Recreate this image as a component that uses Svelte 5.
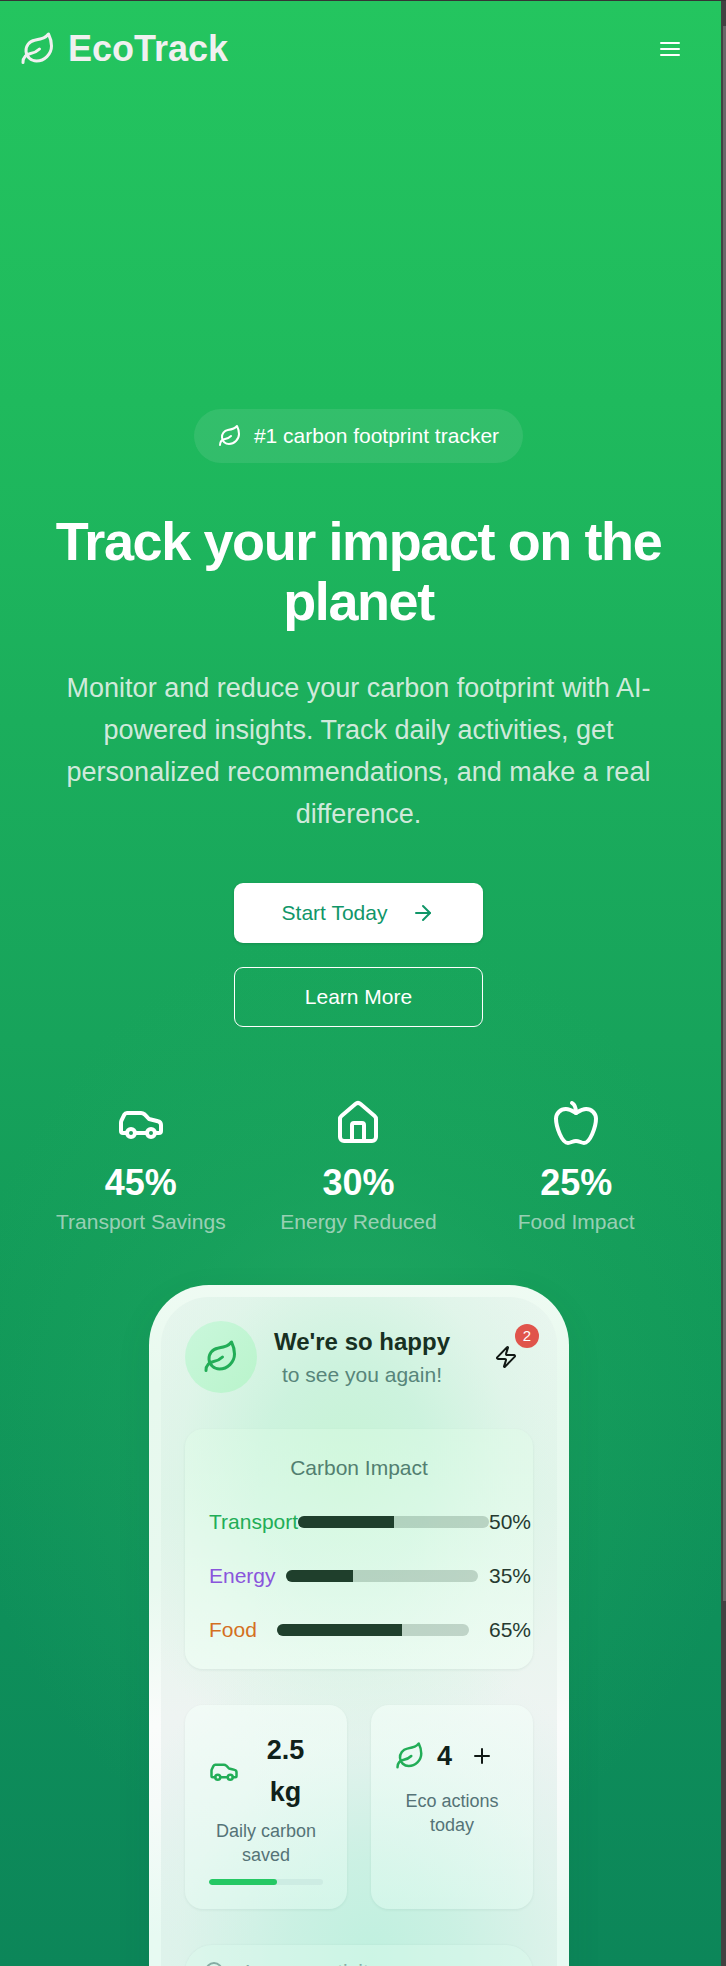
<script>
  const stats = [
    { icon: 'car', value: '45%', label: 'Transport Savings' },
    { icon: 'house', value: '30%', label: 'Energy Reduced' },
    { icon: 'apple', value: '25%', label: 'Food Impact' }
  ];
  const impact = [
    { label: 'Transport', value: 50, color: '#22ad57' },
    { label: 'Energy', value: 35, color: '#8a55dc' },
    { label: 'Food', value: 65, color: '#d4701f' }
  ];
</script>

{#snippet icon(name, size)}
  <svg class="icon" width={size} height={size} viewBox="0 0 24 24" fill="none" stroke="currentColor" stroke-width="2" stroke-linecap="round" stroke-linejoin="round">
    {#if name === 'leaf'}
      <path d="M11 20A7 7 0 0 1 9.8 6.1C15.5 5 17 4.48 19 2c1 2 2 4.18 2 8 0 5.5-4.78 10-10 10Z" />
      <path d="M2 21c0-3 1.85-5.36 5.08-6C9.5 14.52 12 13 13 12" />
    {:else if name === 'car'}
      <path d="M19 17h2c.6 0 1-.4 1-1v-3c0-.9-.7-1.7-1.5-1.9C18.7 10.6 16 10 16 10s-1.3-1.4-2.2-2.3c-.5-.4-1.1-.7-1.8-.7H5c-.6 0-1.1.4-1.4.9l-1.4 2.9A3.7 3.7 0 0 0 2 12v4c0 .6.4 1 1 1h2" />
      <circle cx="7" cy="17" r="2" /><path d="M9 17h6" /><circle cx="17" cy="17" r="2" />
    {:else if name === 'house'}
      <path d="M15 21v-8a1 1 0 0 0-1-1h-4a1 1 0 0 0-1 1v8" />
      <path d="M3 10a2 2 0 0 1 .709-1.528l7-5.999a2 2 0 0 1 2.582 0l7 5.999A2 2 0 0 1 21 10v9a2 2 0 0 1-2 2H5a2 2 0 0 1-2-2z" />
    {:else if name === 'apple'}
      <path d="M12 20.94c1.5 0 2.75 1.06 4 1.06 3 0 6-8 6-12.22A4.91 4.91 0 0 0 17 5c-2.22 0-4 1.44-5 2-1-.56-2.78-2-5-2a4.9 4.9 0 0 0-5 4.78C2 14 5 22 8 22c1.25 0 2.5-1.06 4-1.06Z" />
      <path d="M10 2c1 .5 2 2 2 5" />
    {:else if name === 'zap'}
      <path d="M4 14a1 1 0 0 1-.78-1.63l9.9-10.2a.5.5 0 0 1 .86.46l-1.92 6.02A1 1 0 0 0 13 10h7a1 1 0 0 1 .78 1.63l-9.9 10.2a.5.5 0 0 1-.86-.46l1.92-6.02A1 1 0 0 0 11 14z" />
    {:else if name === 'arrow'}
      <path d="M5 12h14" /><path d="m12 5 7 7-7 7" />
    {:else if name === 'plus'}
      <path d="M5 12h14" /><path d="M12 5v14" />
    {:else if name === 'search'}
      <circle cx="11" cy="11" r="8" /><path d="m21 21-4.3-4.3" />
    {/if}
  </svg>
{/snippet}

<div class="window">
  <div class="page">
    <header>
      <div class="brand">{@render icon('leaf', 36)}<span>EcoTrack</span></div>
      <button class="menu" aria-label="Menu"><i></i><i></i><i></i></button>
    </header>

    <main>
      <div class="pill">{@render icon('leaf', 24)}<span>#1 carbon footprint tracker</span></div>
      <h1>Track your impact on the planet</h1>
      <p class="lead">Monitor and reduce your carbon footprint with AI-powered insights. Track daily activities, get personalized recommendations, and make a real difference.</p>
      <div class="actions">
        <button class="btn solid">Start Today {@render icon('arrow', 24)}</button>
        <button class="btn outline">Learn More</button>
      </div>
      <div class="stats">
        {#each stats as s}
          <div class="stat">
            {@render icon(s.icon, 48)}
            <strong>{s.value}</strong>
            <span>{s.label}</span>
          </div>
        {/each}
      </div>

      <div class="phone">
        <div class="screen">
          <div class="hello">
            <div class="avatar">{@render icon('leaf', 36)}</div>
            <div class="greeting">
              <b>We're so happy</b>
              <span>to see you again!</span>
            </div>
            <button class="bolt" aria-label="Notifications">{@render icon('zap', 24)}<em>2</em></button>
          </div>

          <section class="card impact">
            <h2>Carbon Impact</h2>
            {#each impact as row}
              <div class="row">
                <span style="color: {row.color}">{row.label}</span>
                <div class="track"><div class="fill" style="width: {row.value}%"></div></div>
                <span class="pct">{row.value}%</span>
              </div>
            {/each}
          </section>

          <div class="tiles">
            <section class="card tile">
              <div class="head">{@render icon('car', 30)}<b>2.5 kg</b></div>
              <p>Daily carbon saved</p>
              <div class="progress"><div></div></div>
            </section>
            <section class="card tile">
              <div class="head">
                {@render icon('leaf', 30)}<b>4</b>
                <button class="add" aria-label="Add action">{@render icon('plus', 24)}</button>
              </div>
              <p>Eco actions today</p>
            </section>
          </div>

          <div class="entry">{@render icon('search', 24)}<span>Log an activity...</span></div>
        </div>
      </div>
    </main>
  </div>
  <div class="scrollbar"><div class="thumb"></div></div>
</div>

<style>
  :global(body) { margin: 0; background: #0c8759; }
  .window {
    box-sizing: border-box;
    height: 1966px;
    overflow: hidden;
    display: flex;
    border-top: 1px solid #353535;
    background: #424242;
    font-family: "Liberation Sans", Arial, sans-serif;
    font-size: 21px;
    line-height: 30px;
  }
  .window * { box-sizing: border-box; }
  .page {
    width: 721px;
    flex: none;
    color: #fff;
    background:
      radial-gradient(400px 480px at 359px 1400px, rgba(45, 178, 105, .5), rgba(35, 172, 98, .24) 50%, rgba(30, 170, 95, 0)),
      linear-gradient(180deg, #24c55f 0, #1fba5d 400px, #1bae5c 720px, #17a35b 1040px, #129a59 1300px, #0e8f5a 1620px, #0c8659 1966px);
  }
  .scrollbar { flex: 1; padding: 25px 0 0 2px; }
  .thumb { height: 1575px; background: #686868; }
  .icon { display: block; flex: none; }
  button { font: inherit; color: inherit; background: none; border: 0; padding: 0; }

  header {
    height: 96px;
    padding: 0 39px 0 20px;
    display: flex;
    align-items: center;
    justify-content: space-between;
  }
  .brand {
    display: flex;
    align-items: center;
    gap: 12px;
    color: #f0f0f0;
    font-size: 36px;
    line-height: 48px;
    font-weight: 700;
  }
  .menu { width: 24px; display: grid; gap: 4px; justify-content: center; }
  .menu i { display: block; width: 20px; height: 2px; background: #fff; border-radius: 1px; }

  main {
    width: 717px;
    padding-top: 312px;
    display: flex;
    flex-direction: column;
    align-items: center;
    text-align: center;
  }
  .pill {
    display: flex;
    align-items: center;
    gap: 12px;
    padding: 12px 24px;
    border-radius: 27px;
    background: rgba(240, 240, 240, .1);
  }
  h1 {
    width: 640px;
    margin: 48px 0 0;
    font-size: 54px;
    line-height: 60px;
    letter-spacing: -1.4px;
  }
  .lead {
    width: 605px;
    margin: 36px 0 0;
    font-size: 27px;
    line-height: 42px;
    color: rgba(240, 245, 242, .87);
  }
  .actions { margin-top: 48px; width: 249px; display: grid; gap: 24px; }
  .btn {
    height: 60px;
    border-radius: 9px;
    display: flex;
    align-items: center;
    justify-content: center;
  }
  .solid { background: #fff; color: #109668; gap: 24px; box-shadow: 0 1px 3px rgba(0, 0, 0, .15); }
  .outline { border: 1px solid #fff; }
  .stats {
    margin-top: 72px;
    width: 605px;
    display: grid;
    grid-template-columns: repeat(3, 1fr);
    gap: 48px;
  }
  .stat { display: flex; flex-direction: column; align-items: center; white-space: nowrap; }
  .stat strong { margin-top: 12px; font-size: 36px; line-height: 48px; }
  .stat span { color: rgba(240, 240, 240, .62); }

  .phone {
    margin: 48px 0 0 1px;
    width: 420px;
    height: 900px;
    flex: none;
    border-radius: 60px;
    padding: 12px;
    background: linear-gradient(180deg, #effbf3 0, #e7f9ee 100px, #e8f9ef 300px, #fafcfb 440px, #f6fbf9 520px, #e7faf2 650px, #e7faf2);
    box-shadow: 0 12px 36px rgba(0, 80, 50, .08);
  }
  .screen {
    height: 876px;
    padding: 24px;
    border-radius: 48px;
    background:
      radial-gradient(240px 300px at 185px 175px, #c6f3d5 0, rgba(200, 242, 219, .85) 35%, rgba(212, 243, 226, .4) 70%, rgba(225, 243, 232, 0) 100%),
      radial-gradient(280px 320px at 210px 660px, #c0f0df 0, rgba(198, 240, 225, .85) 30%, rgba(214, 242, 231, .4) 68%, rgba(232, 243, 238, 0) 100%),
      linear-gradient(180deg, #e9f6ef 0, #e3f5eb 200px, #eaf5ef 340px, #eef4f2 420px, #ecf3f2 490px, #e2f3ed 640px);
    color: #12251b;
  }
  .hello { display: flex; align-items: center; }
  .avatar {
    width: 72px;
    height: 72px;
    display: grid;
    place-items: center;
    border-radius: 50%;
    color: #22ad57;
    background: linear-gradient(135deg, #caf7dc, #b9f4cb);
  }
  .greeting { margin-left: 17px; display: grid; color: #57857a; }
  .greeting b { font-size: 24px; line-height: 36px; color: #173022; }
  .bolt { position: relative; width: 54px; height: 54px; margin-left: auto; display: grid; place-items: center; color: #101814; }
  .bolt em {
    position: absolute;
    top: -6px;
    right: -6px;
    width: 24px;
    height: 24px;
    border-radius: 50%;
    background: #e0544b;
    color: #fff;
    font-style: normal;
    font-size: 15px;
    line-height: 24px;
  }
  .card {
    border-radius: 18px;
    padding: 24px;
    background: linear-gradient(180deg, rgba(244, 255, 249, .6), rgba(232, 255, 245, .38));
    box-shadow: 0 1px 3px rgba(20, 80, 60, .08);
  }
  .impact {
    margin-top: 36px;
    display: grid;
    grid-template-columns: 300px;
    gap: 24px;
    background: linear-gradient(180deg, rgba(225, 255, 232, .36), rgba(240, 255, 245, .62));
  }
  h2 { margin: 0; font-size: 21px; font-weight: 400; line-height: 30px; color: #527f70; }
  .row { width: 322px; display: flex; align-items: center; justify-content: space-between; }
  .track { width: 192px; height: 12px; border-radius: 6px; overflow: hidden; background: rgba(23, 60, 40, .2); }
  .fill { height: 100%; background: rgba(12, 45, 26, .89); }
  .pct { color: #263a30; }
  .tiles { margin-top: 36px; display: grid; grid-template-columns: 1fr 1fr; gap: 24px; }
  .tile { height: 204px; }
  .head { display: flex; align-items: center; color: #22ad57; }
  .head b { flex: 1; margin-left: 9px; font-size: 27px; line-height: 42px; color: #10211a; }
  .add { width: 54px; height: 54px; display: grid; place-items: center; color: #101814; }
  .tile p { margin: 6px 0 0; font-size: 18px; line-height: 24px; color: #557377; }
  .progress { margin-top: 12px; height: 6px; border-radius: 3px; background: #cdece3; overflow: hidden; }
  .progress div { width: 60%; height: 100%; border-radius: 3px; background: #25c864; }
  .entry {
    margin-top: 36px;
    height: 54px;
    padding: 0 18px;
    border-radius: 27px;
    display: flex;
    align-items: center;
    gap: 18px;
    color: #85aca3;
    background: rgba(220, 250, 238, .45);
    box-shadow: 0 0 2px rgba(20, 80, 60, .08);
  }
</style>
